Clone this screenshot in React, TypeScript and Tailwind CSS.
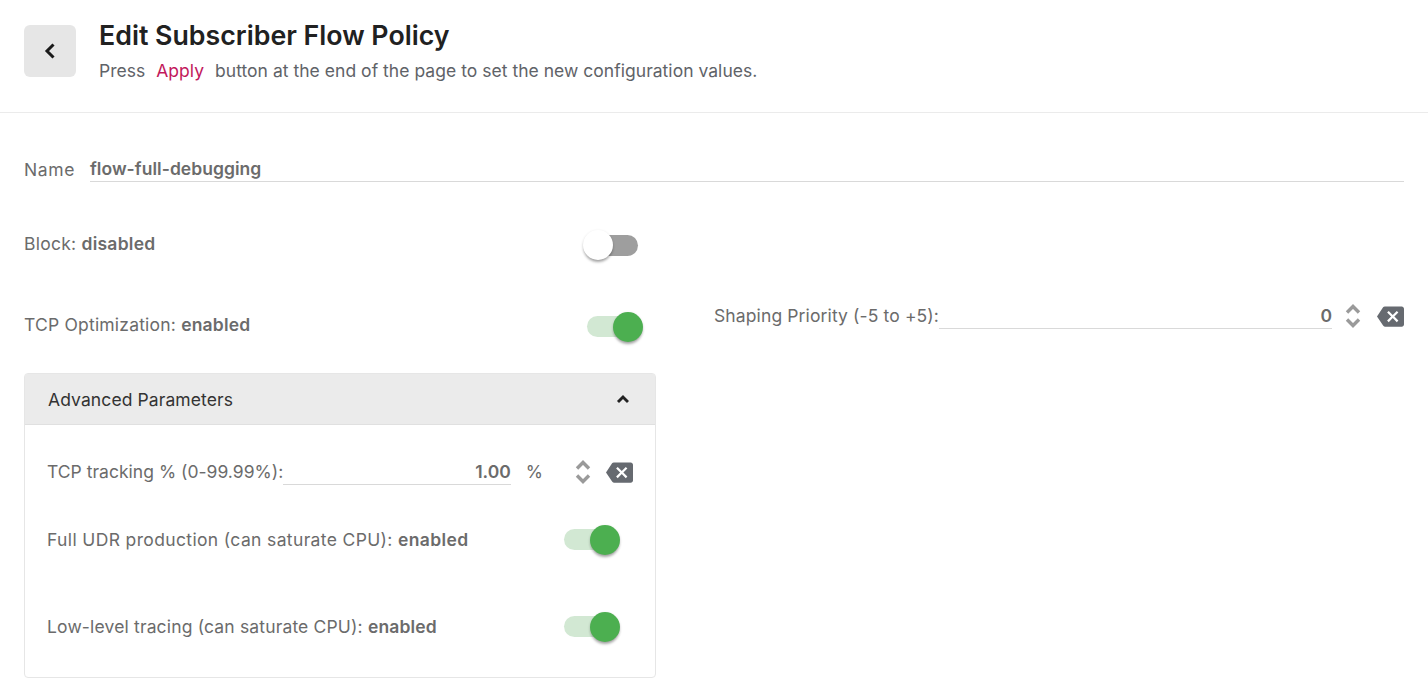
const BACKSPACE = 'M22 3H7c-.69 0-1.23.35-1.59.88L0 12l5.41 8.11c.36.53.9.89 1.59.89h15c1.1 0 2-.9 2-2V5c0-1.1-.9-2-2-2zm-3 12.59L17.59 17 14 13.41 10.41 17 9 15.59 12.59 12 9 8.41 10.41 7 14 10.59 17.59 7 19 8.41 15.41 12 19 15.59z'
const SHADOW = 'shadow-[0_3px_3px_-1px_rgba(0,0,0,0.3),0_1px_3px_0_rgba(0,0,0,0.14)]'

function Toggle({ on }: { on: boolean }) {
  return (
    <div className={`relative w-[51px] h-[21px] rounded-full ${on ? 'bg-[#d2e8d3]' : 'bg-[#9e9e9e]'}`}>
      <div
        className={`absolute w-[30px] h-[30px] rounded-full ${SHADOW} ${
          on ? 'top-[-4px] right-[-5px] bg-[#4caf50]' : 'top-[-5px] left-[-4px] bg-white'
        }`}
      />
    </div>
  )
}

function Unfold() {
  return (
    <svg viewBox="0 0 16 26" className="w-[16px] h-[26px] fill-none stroke-[#9a9a9a] stroke-[3.4]">
      <path d="M2 9.5 8 3.5l6 6M2 16.5l6 6 6-6" />
    </svg>
  )
}

function Clear() {
  return (
    <svg viewBox="0 0 24 24" className="w-[27px] h-[27px] fill-[#666a70]">
      <path d={BACKSPACE} />
    </svg>
  )
}

function ToggleRow({ label, value, tracking }: { label: string; value: string; tracking: string }) {
  return (
    <div className="flex items-center justify-between pr-[18px]">
      <span className={`mt-[2px] ${tracking}`}>
        {label} <b className="font-semibold">{value}</b>
      </span>
      <Toggle on />
    </div>
  )
}

export default function App() {
  return (
    <div
      className="h-[697px] overflow-hidden bg-white text-[17.5px] leading-[24px] text-[#6b6b6b]"
      style={{ fontFamily: 'Inter, "Liberation Sans", sans-serif' }}
    >
      <header className="h-[113px] border-b border-[#ebebeb] flex items-start pl-[24px] pt-[25px]">
        <button className="w-[52px] h-[52px] rounded-[6px] bg-[#e6e6e6] flex items-center justify-center">
          <svg viewBox="0 0 24 24" className="w-[24px] h-[24px] fill-none stroke-[#1a1a1a] stroke-[3]">
            <path d="M15.5 5.5 9 12l6.5 6.5" />
          </svg>
        </button>
        <div className="ml-[23px] mt-[-7px]">
          <h1 className="text-[26.75px] leading-[34px] font-semibold text-[#212121]">Edit Subscriber Flow Policy</h1>
          <p className="mt-[7px] text-[#5f6368] tracking-[0.03px]">
            Press <span className="mx-[6px] text-[#c2185b]">Apply</span> button at the end of the page to set the new
            configuration values.
          </p>
        </div>
      </header>

      <main className="px-[24px]">
        <div className="flex items-end h-[69px] gap-[15px]">
          <span className="tracking-[0.6px]">Name</span>
          <div className="flex-1 border-b border-[#d9d9d9] font-semibold tracking-[0.05px]">flow-full-debugging</div>
        </div>

        <div className="flex gap-[58px]">
          <div className="w-[632px] shrink-0">
            <div className="h-[21px] mt-[53px] flex items-center justify-between pr-[18px]">
              <span className="mt-[-3px] tracking-[0.25px]">
                Block: <b className="font-semibold">disabled</b>
              </span>
              <Toggle on={false} />
            </div>
            <div className="h-[21px] mt-[60px] flex items-center justify-between pr-[18px]">
              <span className="mt-[-3px] tracking-[0.2px]">
                TCP Optimization: <b className="font-semibold">enabled</b>
              </span>
              <Toggle on />
            </div>

            <section className="mt-[36px] h-[305px] border border-[#e6e6e6] rounded-[4px]">
              <div className="h-[51px] bg-[#ebebeb] border-b border-[#e0e0e0] flex items-center justify-between pl-[23px] pr-[22px] text-[#333] tracking-[0.1px]">
                <span className="mt-[2px]">Advanced Parameters</span>
                <svg viewBox="0 0 24 24" className="w-[20px] h-[20px] fill-none stroke-[#222] stroke-[3.4]">
                  <path d="M6 15.5l6-6 6 6" />
                </svg>
              </div>
              <div className="pl-[22px] pr-[22px]">
                <div className="flex items-center h-[32px] mt-[31px]">
                  <span className="shrink-0 tracking-[0.02px]">TCP tracking % (0-99.99%):</span>
                  <div className="flex-1 border-b border-[#d9d9d9] text-right font-semibold">1.00</div>
                  <span className="ml-[15px]">%</span>
                  <div className="ml-[32px]">
                    <Unfold />
                  </div>
                  <div className="ml-[15px]">
                    <Clear />
                  </div>
                </div>
                <div className="mt-[38px]">
                  <ToggleRow label="Full UDR production (can saturate CPU):" value="enabled" tracking="tracking-[0.36px]" />
                </div>
                <div className="mt-[61px]">
                  <ToggleRow label="Low-level tracing (can saturate CPU):" value="enabled" tracking="tracking-[0.16px]" />
                </div>
              </div>
            </section>
          </div>

          <div className="flex-1 pt-[118px]">
            <div className="flex items-center h-[32px]">
              <span className="shrink-0 tracking-[0.12px]">Shaping Priority (-5 to +5):</span>
              <div className="flex-1 border-b border-[#d9d9d9] text-right font-semibold">0</div>
              <div className="ml-[13px]">
                <Unfold />
              </div>
              <div className="ml-[16px]">
                <Clear />
              </div>
            </div>
          </div>
        </div>
      </main>
    </div>
  )
}
